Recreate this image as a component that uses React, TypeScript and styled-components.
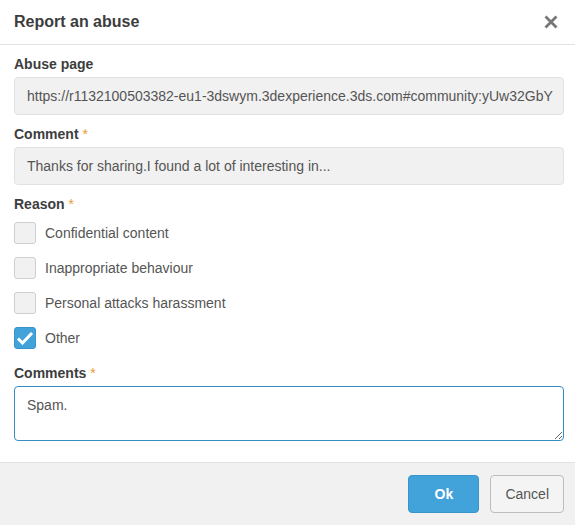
import React, { useState } from "react";
import styled, { createGlobalStyle } from "styled-components";

const GlobalStyle = createGlobalStyle`
  html, body {
    margin: 0;
    padding: 0;
    background: #ffffff;
    font-family: "Liberation Sans", Arial, sans-serif;
  }
  * {
    box-sizing: border-box;
  }
`;

const Dialog = styled.div`
  width: 575px;
  height: 525px;
  display: flex;
  flex-direction: column;
  background: #ffffff;
  color: #3d3d3d;
`;

const Header = styled.div`
  height: 45px;
  display: flex;
  align-items: center;
  justify-content: space-between;
  padding: 0 14px;
  border-bottom: 1px solid #e2e2e2;
`;

const Title = styled.h1`
  margin: 0;
  font-size: 16px;
  font-weight: bold;
  color: #3d3d3d;
`;

const CloseButton = styled.button`
  border: none;
  background: none;
  padding: 0;
  width: 20px;
  height: 20px;
  display: flex;
  align-items: center;
  justify-content: center;
  cursor: pointer;
`;

const Body = styled.div`
  flex: 1;
  padding: 9px 11px 0 14px;
  display: flex;
  flex-direction: column;
`;

const Label = styled.div<{ $gap?: number }>`
  font-size: 14px;
  font-weight: bold;
  line-height: 20px;
  color: #3d3d3d;
  margin-top: ${(p) => p.$gap ?? 0}px;
  margin-bottom: 3px;
`;

const Required = styled.span`
  color: #eb9a2f;
  font-weight: normal;
  margin-left: 4px;
`;

const ReadOnly = styled.div`
  height: 38px;
  display: flex;
  align-items: center;
  padding: 0 12px;
  background: #f1f1f1;
  border: 1px solid #e2e2e2;
  border-radius: 4px;
  font-size: 14px;
  color: #555555;
  white-space: nowrap;
  overflow: hidden;
`;

const Options = styled.div`
  display: flex;
  flex-direction: column;
  gap: 13px;
  margin-top: 5px;
`;

const Option = styled.label`
  display: flex;
  align-items: center;
  gap: 9px;
  height: 22px;
  font-size: 14px;
  color: #555555;
  cursor: pointer;
`;

const Box = styled.span<{ $checked: boolean }>`
  width: 22px;
  height: 22px;
  border-radius: 3px;
  display: flex;
  align-items: center;
  justify-content: center;
  background: ${(p) => (p.$checked ? "#42a2da" : "#f1f1f1")};
  border: 1px solid ${(p) => (p.$checked ? "#3a94c9" : "#cfcfcf")};
`;

const TextArea = styled.textarea`
  height: 55px;
  width: 100%;
  padding: 8px 12px;
  border: 1px solid #368ec4;
  border-radius: 4px;
  font-family: "Liberation Sans", Arial, sans-serif;
  font-size: 14px;
  color: #555555;
  line-height: 20px;
  outline: none;
  resize: vertical;
`;

const Footer = styled.div`
  height: 63px;
  display: flex;
  align-items: center;
  justify-content: flex-end;
  gap: 11px;
  padding: 0 11px 0 14px;
  background: #f1f1f1;
  border-top: 1px solid #e2e2e2;
`;

const Button = styled.button<{ $primary?: boolean }>`
  height: 38px;
  min-width: ${(p) => (p.$primary ? 71 : 73)}px;
  padding: 0 14px;
  border-radius: 4px;
  font-family: "Liberation Sans", Arial, sans-serif;
  font-size: 14px;
  font-weight: ${(p) => (p.$primary ? "bold" : "normal")};
  color: ${(p) => (p.$primary ? "#ffffff" : "#555555")};
  background: ${(p) => (p.$primary ? "#42a2da" : "#f4f4f4")};
  border: 1px solid ${(p) => (p.$primary ? "#3a94c9" : "#bdbdbd")};
  cursor: pointer;
`;

const reasons = [
  "Confidential content",
  "Inappropriate behaviour",
  "Personal attacks harassment",
  "Other",
];

export default function App() {
  const [picked, setPicked] = useState<string[]>(["Other"]);
  const [text, setText] = useState("Spam.");

  const toggle = (r: string) =>
    setPicked((cur) => (cur.includes(r) ? cur.filter((x) => x !== r) : [...cur, r]));

  return (
    <>
      <GlobalStyle />
      <Dialog>
        <Header>
          <Title>Report an abuse</Title>
          <CloseButton aria-label="Close">
            <svg width="14" height="14" viewBox="0 0 14 14">
              <path d="M1.5 1.5 L12.5 12.5 M12.5 1.5 L1.5 12.5" stroke="#777" strokeWidth="2.8" strokeLinecap="butt" />
            </svg>
          </CloseButton>
        </Header>
        <Body>
          <Label>Abuse page</Label>
          <ReadOnly>https://r1132100503382-eu1-3dswym.3dexperience.3ds.com#community:yUw32GbY</ReadOnly>
          <Label $gap={9}>
            Comment<Required>*</Required>
          </Label>
          <ReadOnly>Thanks for sharing.I found a lot of interesting in...</ReadOnly>
          <Label $gap={9}>
            Reason<Required>*</Required>
          </Label>
          <Options>
            {reasons.map((r) => {
              const on = picked.includes(r);
              return (
                <Option key={r} onClick={() => toggle(r)}>
                  <Box $checked={on}>
                    {on && (
                      <svg width="18" height="14" viewBox="0 0 18 14">
                        <path d="M2 7.5 L6.5 12 L16 2" fill="none" stroke="#fff" strokeWidth="3" />
                      </svg>
                    )}
                  </Box>
                  {r}
                </Option>
              );
            })}
          </Options>
          <Label $gap={14}>
            Comments<Required>*</Required>
          </Label>
          <TextArea value={text} onChange={(e) => setText(e.target.value)} />
        </Body>
        <Footer>
          <Button $primary>Ok</Button>
          <Button>Cancel</Button>
        </Footer>
      </Dialog>
    </>
  );
}
